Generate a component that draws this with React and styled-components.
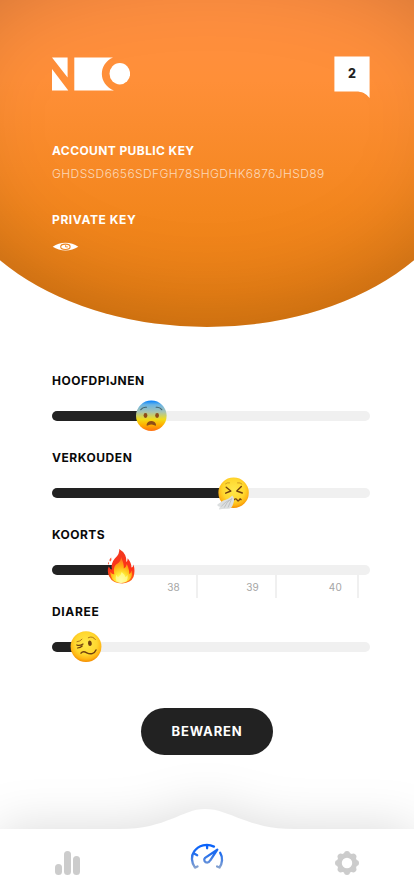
import React from 'react';
import styled, { createGlobalStyle } from 'styled-components';

const GlobalStyle = createGlobalStyle`
  * { box-sizing: border-box; }
  body { margin: 0; background: #fff; font-family: Inter, "Liberation Sans", sans-serif; }
`;

const Screen = styled.div`
  width: 414px;
  height: 896px;
  display: flex;
  flex-direction: column;
  overflow: hidden;
  background: #fff;
`;

const Hero = styled.header`
  position: relative;
  height: 327px;
  flex: none;
  padding: 56px 44px 0 52px;
  overflow: hidden;
  color: #fff;
`;

const HeroShape = styled.div`
  position: absolute;
  left: -60px;
  right: -60px;
  top: -52px;
  bottom: 0;
  border-radius: 50% / 120px 120px 181px 181px;
  background: linear-gradient(#ff8f42 12%, #ff8f38 35%, #f3861d 70%, #e87f12);
  box-shadow: inset 0 0 100px rgba(0, 0, 0, 0.22);
`;

const HeroContent = styled.div`
  position: relative;
  display: flex;
  flex-direction: column;
  align-items: flex-start;
`;

const TopBar = styled.div`
  width: 100%;
  height: 43px;
  margin-bottom: 43px;
  display: flex;
  justify-content: space-between;
`;

const Logo = styled.svg`
  width: 78px;
  height: 34px;
  margin-top: 1px;
`;

const Message = styled.div`
  width: 36px;
  height: 43px;
  padding-top: 9px;
  background: #fff;
  clip-path: path('M.4 .4H35.6V42C32 37.5 28 35.5 22 35.5H.4Z');
  color: #222;
  text-align: center;
  font-size: 12.5px;
  line-height: 18px;
  font-weight: 800;
`;

const Label = styled.div`
  height: 18px;
  line-height: 18px;
  font-size: 12px;
  font-weight: 700;
  letter-spacing: ${(p) => p.$tracking || 0}px;
  white-space: nowrap;
`;

const KeyValue = styled.div`
  height: 18px;
  margin: 5px 0 28px;
  line-height: 18px;
  font-size: 12px;
  font-weight: 300;
  letter-spacing: 0.4px;
  color: rgba(255, 255, 255, 0.68);
  white-space: nowrap;
`;

const Eye = styled.svg`
  width: 27px;
  height: 10px;
  margin-top: 13px;
`;

const Form = styled.main`
  height: 443px;
  padding: 45px 44px 0 52px;
  display: flex;
  flex-direction: column;
  color: #0a0a0a;
`;

const Symptom = styled.section`
  height: 77px;
  flex: none;
`;

const Track = styled.div`
  position: relative;
  height: 10px;
  margin-top: 21px;
  border-radius: 5px;
  background: #f0f0f0;
`;

const Fill = styled.div`
  width: ${(p) => p.$width}px;
  height: 10px;
  border-radius: 5px 0 0 5px;
  background: #222;
`;

const Thumb = styled.svg`
  position: absolute;
  left: ${(p) => p.$x - 18}px;
  top: ${(p) => p.$top ?? -13}px;
  width: 36px;
  height: 36px;
  z-index: 1;
`;

const Ticks = styled.div`
  display: flex;
`;

const Tick = styled.div`
  width: ${(p) => p.$width}px;
  height: 23px;
  padding: 4px ${(p) => p.$gap}px 0 0;
  border-right: 2px solid #f0f0f0;
  color: #a5a5a5;
  font-size: 10px;
  line-height: 17px;
  letter-spacing: 0.2px;
  text-align: right;
`;

const SaveButton = styled.button`
  width: 132px;
  height: 47px;
  margin: 28px 0 0 89px;
  padding: 0 0 2px;
  border: 0;
  border-radius: 24px;
  background: #222;
  color: #fff;
  font: 700 13px Inter, "Liberation Sans", sans-serif;
  letter-spacing: 0.85px;
`;

const Nav = styled.nav`
  height: 87px;
  margin-top: 39px;
  flex: none;
  display: flex;
  flex-direction: column;
  align-items: center;
  filter: drop-shadow(0 0 25px rgba(0, 0, 0, 0.15));
`;

const Hump = styled.svg`
  width: 174px;
  height: 21px;
  margin-bottom: -1px;
  flex: none;
`;

const NavItems = styled.div`
  width: 414px;
  height: 67px;
  display: flex;
  justify-content: space-between;
  padding: 12px 54px 0;
  background: #fff;
`;

const NavButton = styled.button`
  display: block;
  width: 34px;
  height: 38px;
  padding: 0;
  border: 0;
  background: none;
`;

const NavIcon = styled.svg`
  display: block;
  width: 34px;
  height: 38px;
`;

function Gradients() {
  return (
    <defs>
      <linearGradient id="fear" x2="0" y2="1">
        <stop offset="0" stopColor="#007fff" />
        <stop offset=".14" stopColor="#68b3e4" />
        <stop offset=".38" stopColor="#a8c3b0" />
        <stop offset=".62" stopColor="#f2dc17" />
        <stop offset=".8" stopColor="#ffb000" />
        <stop offset="1" stopColor="#ff6f12" />
      </linearGradient>
      <radialGradient id="yellow" cx=".5" cy=".4" r=".6">
        <stop stopColor="#ffe84b" />
        <stop offset=".6" stopColor="#ffd72e" />
        <stop offset=".85" stopColor="#ffb514" />
        <stop offset="1" stopColor="#f38d00" />
      </radialGradient>
      <linearGradient id="flameOuter" x2="0" y2="1">
        <stop stopColor="#f23a20" />
        <stop offset=".6" stopColor="#ff3218" />
        <stop offset="1" stopColor="#ff7419" />
      </linearGradient>
      <radialGradient id="flameInner" cx=".5" cy=".9" r=".85">
        <stop stopColor="#ffffc0" />
        <stop offset=".3" stopColor="#ffef38" />
        <stop offset=".65" stopColor="#ffac12" />
        <stop offset="1" stopColor="#ff6b20" />
      </radialGradient>
    </defs>
  );
}

function Fearful({ x }) {
  return (
    <Thumb $x={x} viewBox="0 0 36 36">
      <Gradients />
      <circle cx="18.3" cy="17.7" r="15.3" fill="url(#fear)" />
      <g fill="none" stroke="#42616b" strokeWidth="1.1" strokeLinecap="round">
        <path d="M7.8 11.7C9.3 9.7 11.3 9 13.5 9.3M23.1 9.3C25.3 9 27.3 9.7 28.8 11.7" />
      </g>
      <g fill="#8d4d18">
        <ellipse cx="12.5" cy="17.5" rx="1.9" ry="2.4" />
        <ellipse cx="24.1" cy="17.5" rx="1.9" ry="2.4" />
        <path d="M13.5 27C14 21.6 22.6 21.6 23.1 27C23.1 28 22.1 27.8 21.3 27.3C19.3 26.3 17.3 26.3 15.3 27.3C14.5 27.8 13.5 28 13.5 27Z" />
      </g>
    </Thumb>
  );
}

function Sneezing({ x }) {
  return (
    <Thumb $x={x} viewBox="0 0 36 36">
      <circle cx="18.6" cy="17.8" r="15.2" fill="url(#yellow)" />
      <g fill="none" stroke="#713f0e" strokeLinecap="round" strokeLinejoin="round">
        <path strokeWidth="1.4" d="M11.2 12.3L15.8 16L10.7 18.2M26.3 11.6L21.8 16L27.3 18" />
        <path strokeWidth=".8" d="M10.5 8.8Q12 7.3 14.5 7.8M22.5 7.8Q25.5 7.3 27 9" stroke="#c58b1a" />
        <path strokeWidth="1.4" d="M19 24.8Q21 22.8 22.2 25.2Q23.2 27 24.5 24.5Q25.2 23.5 26 24.7" />
      </g>
      <path d="M17.3 20.6Q20.3 24 18.3 28.5Q17 33.8 13 33.8Q7.5 33.4 4.3 34.6Q3.5 33.5 5.2 31.8Q2 31.6 2.4 29.5L8.2 25.4Q13.5 24.8 17.3 20.6Z" fill="#dcdfe0" />
      <path d="M17 23L13 32.5M16.3 23.8Q11.5 27 9.2 32.7M14.5 25Q10 27 6.3 31.4" fill="none" stroke="#b7babc" strokeWidth=".8" />
    </Thumb>
  );
}

function Flame({ x }) {
  return (
    <Thumb $x={x} $top={-16} viewBox="0 0 36 36">
      <path d="M16.2 0Q23.8 4.5 23.4 13Q24.5 12.8 24.7 9.3Q28.8 14.5 28.4 18.5Q30.3 18.2 30.5 15.6Q32.4 22 30.5 28Q27.8 34 19.5 34.4Q9.5 34.5 6.2 27.5Q3.6 22 5.8 17.6Q7 20.5 9 20.6Q7.5 14.8 11.8 9.6Q17 4.8 16.2 0Z" fill="url(#flameOuter)" />
      <path d="M18 8Q21.2 14.8 20.8 19.5Q23.5 17.8 23.8 15Q26.7 21.3 26.1 25Q28 24.5 28.4 21.5Q30.1 28 26 31.3Q22.5 34.3 17.5 34Q9.4 33.2 8 27Q7.2 24.6 7.3 23Q9.3 25.8 11.3 25.2Q9.9 18.8 12.8 15.7Q18.5 12.5 18 8Z" fill="url(#flameInner)" />
      <path d="M18.7 23Q22 25.8 22.2 28Q24 27.5 24.4 25.8Q26 33.7 18.6 33.8Q11 33.7 13.2 25.4Q14 28 15.4 28Q18.1 26 18.7 23Z" fill="#fffb9f" opacity=".75" />
      <path d="M8.2 8.5Q9 10.6 7.3 12.4Q6 12 6.6 10.6Q7 9.5 8.2 8.5M5.4 13.1Q6.7 13.3 5.7 15.2Q4.2 16.2 5.4 13.1" fill="#ff5536" />
    </Thumb>
  );
}

function Woozy({ x }) {
  return (
    <Thumb $x={x} viewBox="0 0 36 36">
      <circle cx="18" cy="17.6" r="15.4" fill="url(#yellow)" />
      <ellipse cx="21.9" cy="14.3" rx="1.9" ry="2.8" fill="#71410f" transform="rotate(-8 21.9 14.3)" />
      <g fill="none" stroke="#71410f" strokeLinecap="round" strokeLinejoin="round">
        <path d="M8.8 16Q11.5 17.3 15 15M9.5 19Q12.5 18.9 14.2 17" strokeWidth="1.2" />
        <path d="M9 12.8Q12.2 12.5 14 10.2M20.3 8.7Q24.6 6.5 27.4 10.6" strokeWidth="1" stroke="#b1771b" />
        <path d="M13 24.2C14.5 22.2 16.8 22.7 18.8 23.8C22.5 25.8 26.4 24.8 28 20.9" strokeWidth="1.4" />
      </g>
    </Thumb>
  );
}

const symptoms = [
  { name: 'HOOFDPIJNEN', position: 99.2, tracking: 0.52, Face: Fearful },
  { name: 'VERKOUDEN', position: 181, tracking: 0.55, Face: Sneezing },
  { name: 'KOORTS', position: 69, tracking: 0.45, Face: Flame, scale: true },
  { name: 'DIAREE', position: 34, tracking: 0.65, Face: Woozy },
];

export default function App() {
  return (
    <>
      <GlobalStyle />
      <Screen>
        <Hero>
          <HeroShape />
          <HeroContent>
            <TopBar>
              <Logo viewBox="0 0 78 34" fill="#fff" aria-label="NEO">
                <path d="M0 .5H15.6V20.5ZM0 12L16.3 33.5H0ZM22.3 .5H61C46 7 46 27 62 33.5H22.3Z" />
                <ellipse cx="67.8" cy="16.8" rx="10.3" ry="10.7" />
              </Logo>
              <Message>2</Message>
            </TopBar>
            <Label $tracking={0.4}>ACCOUNT PUBLIC KEY</Label>
            <KeyValue>GHDSSD6656SDFGH78SHGDHK6876JHSD89</KeyValue>
            <Label $tracking={0.6}>PRIVATE KEY</Label>
            <Eye viewBox="0 0 27 10">
              <path d="M.7 4.8C8 -.5 19 -.5 26.3 4.8C19 9.7 8 9.7.7 4.8Z" fill="#fff" />
              <ellipse cx="13.4" cy="4.8" rx="4.7" ry="2.7" fill="#fff" stroke="#ef861f" strokeWidth="1.1" />
              <path d="M13.6 3.2V4.9H15.8" stroke="#ef861f" strokeWidth=".9" fill="none" />
            </Eye>
          </HeroContent>
        </Hero>
        <Form>
          {symptoms.map(({ name, position, tracking, Face, scale }) => (
            <Symptom key={name}>
              <Label $tracking={tracking}>{name}</Label>
              <Track>
                <Fill $width={position} />
                <Face x={position} />
              </Track>
              {scale && (
                <Ticks>
                  <Tick $width={146} $gap={16}>38</Tick>
                  <Tick $width={79} $gap={16}>39</Tick>
                  <Tick $width={82} $gap={15}>40</Tick>
                </Ticks>
              )}
            </Symptom>
          ))}
          <SaveButton>BEWAREN</SaveButton>
        </Form>
        <Nav>
          <Hump viewBox="0 0 174 21">
            <path d="M0 20C47 20 62 0 85 0C110 0 127 20 174 20V21H0Z" fill="#fff" />
          </Hump>
          <NavItems>
            <NavButton aria-label="Statistieken">
              <NavIcon viewBox="0 0 34 38" fill="#ccc">
                <rect x="1" y="23" width="7" height="11" rx="3.5" />
                <rect x="10" y="10" width="7" height="24" rx="3.5" />
                <rect x="19" y="15" width="7" height="19" rx="3.5" />
              </NavIcon>
            </NavButton>
            <NavButton aria-label="Dashboard">
              <NavIcon viewBox="0 0 34 38" fill="none" stroke="url(#gauge)" strokeWidth="2.3" strokeLinecap="round" strokeLinejoin="round">
                <defs>
                  <linearGradient id="gauge" gradientUnits="userSpaceOnUse" x1="0" y1="4" x2="0" y2="27">
                    <stop stopColor="#0862fb" />
                    <stop offset=".4" stopColor="#226eed" />
                    <stop offset="1" stopColor="#8aa4ce" />
                  </linearGradient>
                </defs>
                <path d="M7.5 25.5L5 26.6C1.1 21.5 1.1 14.5 4 10.7C8.5 4 17 2.1 24 5.6M30.2 11.8C33.1 16.4 32.4 22.5 29.5 26.5L27.1 25.5M17.1 4.3V7.3M4.5 12.8L7.2 14.3" />
                <path d="M27.3 8.7L15.1 16.9C13.1 18.8 14.8 21.6 17.2 21.6C18.7 21.6 19.7 20.4 20.3 19.3Z" />
              </NavIcon>
            </NavButton>
            <NavButton aria-label="Instellingen">
              <NavIcon viewBox="0 0 34 38">
                <circle cx="21" cy="22" r="7.7" fill="none" stroke="#ccc" strokeWidth="5" />
                <g fill="#ccc">
                  {[0, 45, 90, 135, 180, 225, 270, 315].map((angle) => (
                    <circle key={angle} cx="21" cy="13" r="3" transform={`rotate(${angle} 21 22)`} />
                  ))}
                </g>
              </NavIcon>
            </NavButton>
          </NavItems>
        </Nav>
      </Screen>
    </>
  );
}
